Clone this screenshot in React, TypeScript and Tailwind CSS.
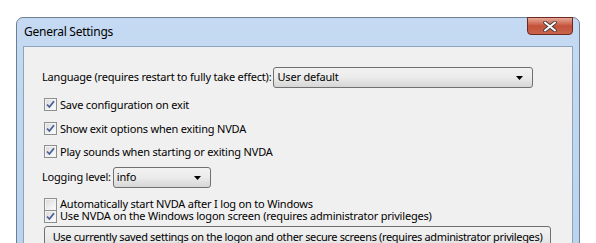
import React from 'react';

const font = { fontFamily: '"Noto Sans", "Open Sans", sans-serif' };

const CheckBox = ({ checked }: { checked: boolean }) => (
  <span className="relative shrink-0 w-[13px] h-[13px] border border-[#8e8f8f] bg-white flex items-center justify-center">
    <span className="w-[11px] h-[11px] border border-[#f4f4f4] bg-gradient-to-br from-[#dcdcdc] to-[#fbfbfb] flex items-center justify-center">
      {checked ? (
        <svg width="9" height="9" viewBox="0 0 9 9">
          <path d="M1 4.5 L3.4 7 L8 1.2" fill="none" stroke="#4a5f9a" strokeWidth="1.8" />
        </svg>
      ) : null}
    </span>
  </span>
);

const CheckRow = ({ checked, label, className }: { checked: boolean; label: string; className?: string }) => (
  <div className={`flex items-center gap-[3px] ${className || ''}`}>
    <CheckBox checked={checked} />
    <span className="text-[11px] tracking-[-0.2px] leading-[12px] text-black whitespace-nowrap">{label}</span>
  </div>
);

const Combo = ({ value, className }: { value: string; className: string }) => (
  <div
    className={`h-[21px] rounded-[3px] border border-[#707070] bg-gradient-to-b from-[#f2f2f2] via-[#ebebeb] to-[#d6d6d6] flex items-center pl-[3px] pr-[9px] ${className}`}
  >
    <span className="flex-1 text-[11px] tracking-[-0.2px] text-black whitespace-nowrap">{value}</span>
    <svg width="7" height="4" viewBox="0 0 7 4">
      <path d="M0 0 H7 L3.5 4 Z" fill="#000" />
    </svg>
  </div>
);

export default function App() {
  return (
    <div className="w-[596px] h-[243px] bg-white overflow-hidden" style={font}>
      <div className="ml-[16px] mt-[17px] w-[564px] h-[260px] rounded-t-[7px] border border-[#6f7f93] bg-gradient-to-b from-[#c5daf2] to-[#b9d2ee] px-[6px] flex flex-col">
        <div className="h-[28px] flex items-start justify-between">
          <span className="pl-[1px] pt-[7px] text-[12px] tracking-[-0.25px] leading-[14px] text-black">General Settings</span>
          <div className="w-[46px] h-[18px] -mt-[1px] rounded-b-[4px] border border-[#6b2a1e] bg-gradient-to-b from-[#e6a998] via-[#c4513a] to-[#c9644c] flex items-center justify-center">
            <svg width="14" height="11" viewBox="0 0 14 11">
              <path d="M2 1.5 L12 9.5 M12 1.5 L2 9.5" stroke="#3d3d3d" strokeWidth="3.6" strokeLinecap="round" />
              <path d="M2 1.5 L12 9.5 M12 1.5 L2 9.5" stroke="#ffffff" strokeWidth="2" strokeLinecap="round" />
            </svg>
          </div>
        </div>
        <div className="flex-1 border border-[#8ea4bd] bg-[#f0f0f0] pl-[18px] pt-[20px] flex flex-col">
          <div className="flex items-center h-[21px]">
            <span className="text-[11px] tracking-[-0.2px] text-black whitespace-nowrap">Language (requires restart to fully take effect):</span>
            <Combo value="User default" className="ml-[2px] w-[260px]" />
          </div>
          <CheckRow checked label="Save configuration on exit" className="h-[13px] mt-[10px] ml-[2px]" />
          <CheckRow checked label="Show exit options when exiting NVDA" className="h-[13px] mt-[11px] ml-[2px]" />
          <CheckRow checked label="Play sounds when starting or exiting NVDA" className="h-[13px] mt-[10px] ml-[2px]" />
          <div className="flex items-center h-[21px] mt-[9px]">
            <span className="text-[11px] tracking-[-0.2px] text-black whitespace-nowrap">Logging level:</span>
            <Combo value="info" className="ml-[2px] w-[98px]" />
          </div>
          <CheckRow checked={false} label="Automatically start NVDA after I log on to Windows" className="h-[12px] mt-[10px] ml-[2px]" />
          <CheckRow checked label="Use NVDA on the Windows logon screen (requires administrator privileges)" className="h-[12px] ml-[2px]" />
          <div className="mt-[4px] ml-[2px] w-[507px] h-[23px] shrink-0 rounded-[3px] border border-[#707070] bg-gradient-to-b from-[#f2f2f2] via-[#ebebeb] to-[#dddddd] flex items-center justify-center">
            <span className="text-[11px] tracking-[-0.35px] text-black whitespace-nowrap">
              Use currently saved settings on the logon and other secure screens (requires administrator privileges)
            </span>
          </div>
        </div>
      </div>
    </div>
  );
}
